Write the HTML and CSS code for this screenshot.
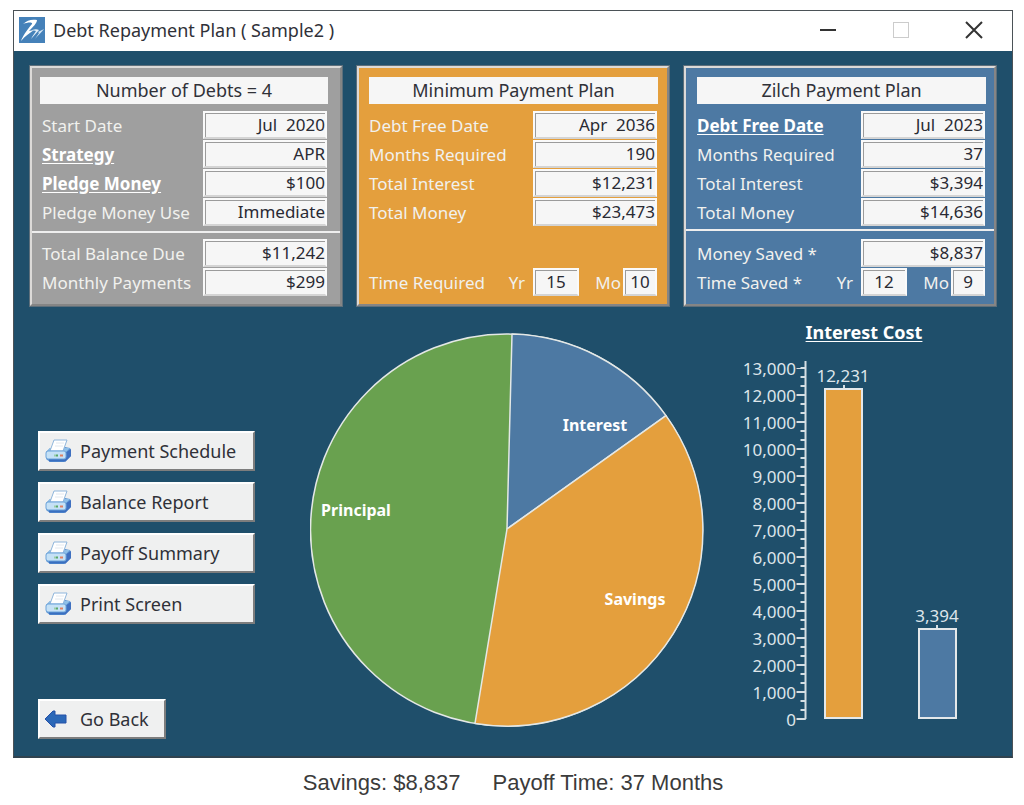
FILE: index.html
```
<!DOCTYPE html>
<html lang="en">
<head>
<meta charset="utf-8">
<meta name="viewport" content="width=device-width, initial-scale=1">
<title>Debt Repayment Plan</title>
<link rel="stylesheet" href="styles.css">
</head>
<body>
<svg class="sprite" aria-hidden="true">
  <symbol id="printer" viewBox="0 0 26 24">
    <path d="M1 13 L5 9 L20 8 L25 9 L26 11 V17 L21 22 L19 23 H5 L1 20 Z" fill="#5b93d2"/>
    <path d="M20 14 L26 10 V17 L20 23 Z" fill="#3f70c0"/>
    <path d="M2 13 L5 9 H20 L25 9 L20 14 Z" fill="#8fc0e8"/>
    <path d="M5 12 L9 1 H22 L18 12 Z" fill="#fff" stroke="#8fb6dc"/>
    <path d="M11 4 H19 M10 7 H18" stroke="#e2e8ee" fill="none"/>
    <rect x="1" y="12" width="20" height="8" rx="2" fill="#c5e1f6" stroke="#6ba3da"/>
    <path d="M4 21.500 H20" stroke="#3a6fc0" stroke-width="2"/>
    <path d="M9 16.500 H11" stroke="#9accaa" stroke-width="2"/>
    <path d="M11 16.500 H13" stroke="#57a868" stroke-width="2"/>
    <path d="M15 16.500 H18" stroke="#e08062" stroke-width="2"/>
  </symbol>
</svg>

<main class="window">
  <header class="titlebar">
    <svg class="logo" viewBox="0 0 26 26" aria-hidden="true">
      <rect width="26" height="26" fill="#4581b9"/>
      <path d="M4 7 C8 3 13 2 18 3 C18 6 14 10 10 14 L15 13 C11 16 6 19 2 24 C4 19 7 14 13 7 C14 5 9 5 4 7 Z" fill="#fff"/>
      <path d="M13 13 C16 12 18 12 20 13 L12 22 C14 18 16 16 17 14 Z" fill="#e6f0f8"/>
      <path d="M19 15 L25 12 C23 15 19 18 16 22 L20 16 Z" fill="#d2e3f2"/>
    </svg>
    <h1 class="title">Debt Repayment Plan ( Sample2 )</h1>
    <div class="controls">
      <button class="control" type="button" aria-label="Minimize"><svg viewBox="0 0 18 18"><path d="M1 9 H17" stroke="#333" stroke-width="2"/></svg></button>
      <button class="control" type="button" aria-label="Maximize" disabled><svg viewBox="0 0 18 18"><rect x="1.500" y="1.500" width="15" height="15" fill="none" stroke="#ccc"/></svg></button>
      <button class="control" type="button" aria-label="Close"><svg viewBox="0 0 18 18"><path d="M1 1 L17 17 M17 1 L1 17" stroke="#333" stroke-width="2"/></svg></button>
    </div>
  </header>

  <div class="content">
    <div class="panels">
      <section class="panel panel-debts">
        <h2 class="panel-title">Number of Debts = 4</h2>
        <div class="row"><label for="start">Start Date</label><input id="start" class="field" readonly value="Jul  2020"></div>
        <div class="row"><a href="#strategy" id="strategy-name">Strategy</a><input class="field" aria-labelledby="strategy-name" readonly value="APR"></div>
        <div class="row"><a href="#pledge" id="pledge-name">Pledge Money</a><input class="field" aria-labelledby="pledge-name" readonly value="$100"></div>
        <div class="row"><label for="use">Pledge Money Use</label><input id="use" class="field" readonly value="Immediate"></div>
        <hr class="rule">
        <div class="row"><label for="balance">Total Balance Due</label><input id="balance" class="field" readonly value="$11,242"></div>
        <div class="row"><label for="monthly">Monthly Payments</label><input id="monthly" class="field" readonly value="$299"></div>
      </section>

      <section class="panel panel-minimum">
        <h2 class="panel-title">Minimum Payment Plan</h2>
        <div class="row"><label for="min-date">Debt Free Date</label><input id="min-date" class="field" readonly value="Apr  2036"></div>
        <div class="row"><label for="min-months">Months Required</label><input id="min-months" class="field" readonly value="190"></div>
        <div class="row"><label for="min-interest">Total Interest</label><input id="min-interest" class="field" readonly value="$12,231"></div>
        <div class="row"><label for="min-money">Total Money</label><input id="min-money" class="field" readonly value="$23,473"></div>
        <div class="row row-last"><span>Time Required</span><label class="unit" for="min-yr">Yr</label>
          <div class="span"><input id="min-yr" class="field years" readonly value="15"><label for="min-mo">Mo</label><input id="min-mo" class="field months" readonly value="10"></div></div>
      </section>

      <section class="panel panel-zilch">
        <h2 class="panel-title">Zilch Payment Plan</h2>
        <div class="row"><a href="#free" id="free-name">Debt Free Date</a><input class="field" aria-labelledby="free-name" readonly value="Jul  2023"></div>
        <div class="row"><label for="z-months">Months Required</label><input id="z-months" class="field" readonly value="37"></div>
        <div class="row"><label for="z-interest">Total Interest</label><input id="z-interest" class="field" readonly value="$3,394"></div>
        <div class="row"><label for="z-money">Total Money</label><input id="z-money" class="field" readonly value="$14,636"></div>
        <hr class="rule">
        <div class="row"><label for="z-saved">Money Saved *</label><input id="z-saved" class="field" readonly value="$8,837"></div>
        <div class="row"><span>Time Saved *</span><label class="unit" for="z-yr">Yr</label>
          <div class="span"><input id="z-yr" class="field years" readonly value="12"><label for="z-mo">Mo</label><input id="z-mo" class="field months" readonly value="9"></div></div>
      </section>
    </div>

    <div class="lower">
      <nav class="actions" aria-label="Reports">
        <button class="action" type="button"><svg class="icon"><use href="#printer"/></svg>Payment Schedule</button>
        <button class="action" type="button"><svg class="icon"><use href="#printer"/></svg>Balance Report</button>
        <button class="action" type="button"><svg class="icon"><use href="#printer"/></svg>Payoff Summary</button>
        <button class="action" type="button"><svg class="icon"><use href="#printer"/></svg>Print Screen</button>
        <button class="action back" type="button"><svg class="icon" viewBox="0 0 26 24"><path d="M0 12 L8 4 H10 V8 H21 V16 H10 V20 H8 Z" fill="#2b68b8" stroke="#2450a8"/></svg>Go Back</button>
      </nav>

      <svg class="pie" viewBox="0 0 394 394" role="img" aria-label="Principal, interest and savings shares">
        <g stroke="#e4e8e6" stroke-width="1.500" stroke-linejoin="round">
          <circle cx="196.500" cy="197" r="196" fill="#69a14f"/>
          <path d="M197 196 L202 1.080 A196 196 0 0 1 356 82.600 Z" fill="#4d79a3"/>
          <path d="M197 196 L356 82.600 A196 196 0 0 1 165 390.460 Z" fill="#e49f3d"/>
        </g>
        <g class="pie-label">
          <text x="285" y="98">Interest</text>
          <text x="325" y="272">Savings</text>
          <text x="46" y="183">Principal</text>
        </g>
      </svg>

      <section class="chart">
        <h2 class="chart-title">Interest Cost</h2>
        <svg class="bars" viewBox="0 0 292 390" role="img" aria-label="Interest cost: 12,231 and 3,394">
          <g stroke="#d5dfe4" fill="none">
            <path d="M101.500 377 V19" stroke-width="2"/>
            <path d="M99 378 V20" stroke-width="5" stroke-dasharray="2 7"/>
            <path d="M97 378 V26" stroke-width="9" stroke-dasharray="2 25"/>
            <path d="M140 43 V47 M233 283 V287" stroke-width="2"/>
          </g>
          <g stroke="#e4e8ea" stroke-width="2">
            <rect x="121" y="47" width="37" height="329" fill="#e49f3d"/>
            <rect x="215" y="287" width="37" height="89" fill="#4d79a3"/>
          </g>
          <g class="axis-label">
            <text x="92" y="33">13,000</text>
            <text x="92" y="60">12,000</text>
            <text x="92" y="87">11,000</text>
            <text x="92" y="114">10,000</text>
            <text x="92" y="141">9,000</text>
            <text x="92" y="168">8,000</text>
            <text x="92" y="195">7,000</text>
            <text x="92" y="222">6,000</text>
            <text x="92" y="249">5,000</text>
            <text x="92" y="276">4,000</text>
            <text x="92" y="303">3,000</text>
            <text x="92" y="330">2,000</text>
            <text x="92" y="357">1,000</text>
            <text x="92" y="384">0</text>
          </g>
          <g class="bar-label">
            <text x="139" y="40">12,231</text>
            <text x="233" y="280">3,394</text>
          </g>
        </svg>
      </section>
    </div>
  </div>
</main>
<footer class="caption"><span>Savings: $8,837</span><span>Payoff Time: 37 Months</span></footer>
</body>
</html>
```
FILE: styles.css
```
* { box-sizing: border-box; }

body {
  margin: 0;
  padding: 10px 11px 0 13px;
  background: #fff;
  color: #303138;
  font: 18px/24px "Noto Sans", "Open Sans", sans-serif;
}

h1, h2 { margin: 0; font-size: inherit; font-weight: 400; }

.sprite { display: none; }

.window { border: 1px solid #4b5257; border-bottom: 2px solid #30434f; }

.titlebar {
  display: flex;
  align-items: center;
  height: 40px;
  padding: 0 20px 2px 5px;
  background: #fff;
}
.logo { width: 26px; height: 26px; margin-right: 8px; }
.controls { display: flex; gap: 37px; margin-left: auto; }
.control { width: 36px; height: 30px; padding: 0; border: 0; background: none; }
.control svg { display: block; width: 18px; height: 18px; margin: 0 auto; }

.content { padding: 15px 16px 17px; background: #1f4f6b; }

.panels { display: grid; grid-template-columns: repeat(3, 1fr); gap: 15px; }
.panel {
  --left: 10px;
  --right: 9px;
  padding: 9px var(--right) 8px var(--left);
  border: 2px solid;
  border-color: #dcdad8 #858585 #858585 #dcdad8;
  outline: 1px solid #5d6f7b;
  color: #f1f1ee;
}
.panel-debts { --left: 8px; --right: 12px; background: #9f9f9f; }
.panel-minimum { background: #e49f3d; }
.panel-zilch { --left: 11px; --right: 8px; background: #4d79a3; }

.panel-title {
  margin-bottom: 6px;
  background: #f6f6f6;
  color: #303138;
  line-height: 27px;
  text-align: center;
}
.row {
  display: flex;
  align-items: center;
  height: 29px;
  padding-right: 1px;
  font-size: 17px;
  line-height: 29px;
}
.panel-debts .row { padding-left: 2px; }
.row > :first-child { flex: 1; padding-top: 2px; white-space: nowrap; }
.row a { color: #fff; font-weight: 700; text-underline-offset: 2px; }
.row .unit { padding: 2px 8px 0 0; }
.row-last { margin-top: 41px; }

.field {
  width: 124px;
  height: 28px;
  padding: 0 0 1px;
  border: 2px solid #fafafa;
  border-bottom-color: #d4d4d4;
  border-radius: 0;
  outline: 0;
  background: #f6f6f6;
  box-shadow: inset 1px 1px #9b9b9b;
  color: #292a33;
  font: 17px/20px "Noto Sans", "Open Sans", sans-serif;
  text-align: right;
}
.row .span { display: flex; align-items: center; width: 124px; }
.span label { flex: 1; padding: 2px 2px 0 0; text-align: right; }
.years { width: 46px; text-align: center; }
.months { width: 34px; text-align: center; }

.rule {
  height: 2px;
  margin: 5px calc(-1 * var(--right)) 5px calc(-1 * var(--left));
  border: 0;
  background: #eee;
}
.panel-zilch .rule { margin-top: 3px; margin-bottom: 7px; }

.lower { display: grid; grid-template-columns: 280fr 394fr 292fr; }

.actions { display: flex; flex-direction: column; gap: 11px; padding: 125px 55px 0 8px; }
.action {
  display: flex;
  align-items: center;
  height: 40px;
  padding: 0 0 0 5px;
  border: 2px solid;
  border-color: #fff #7d7d7d #7d7d7d #fff;
  background: #eff0f0;
  color: #303138;
  font: 18px/24px "Noto Sans", "Open Sans", sans-serif;
  white-space: nowrap;
}
.icon { width: 26px; height: 24px; margin-right: 9px; }
.back { align-self: flex-start; margin-top: auto; padding: 0 15px 0 5px; }

.pie { width: 100%; margin-top: 27px; }
.pie-label { fill: #fff; font-size: 16px; font-weight: 700; text-anchor: middle; }

.chart { padding-bottom: 7px; }
.chart-title {
  padding: 14px 0 0 28px;
  height: 36px;
  color: #fff;
  font-weight: 700;
  text-align: center;
  text-decoration: underline;
  text-underline-offset: 2px;
}
.bars { display: block; width: 100%; }
.axis-label, .bar-label { fill: #dde5ea; font-size: 17px; }
.axis-label { text-anchor: end; }
.bar-label { text-anchor: middle; }

.caption {
  display: flex;
  flex-wrap: wrap;
  justify-content: center;
  gap: 32px;
  padding-top: 9px;
  color: #3b3b3b;
  font: 22px/32px "Liberation Sans", Arial, sans-serif;
}
```
